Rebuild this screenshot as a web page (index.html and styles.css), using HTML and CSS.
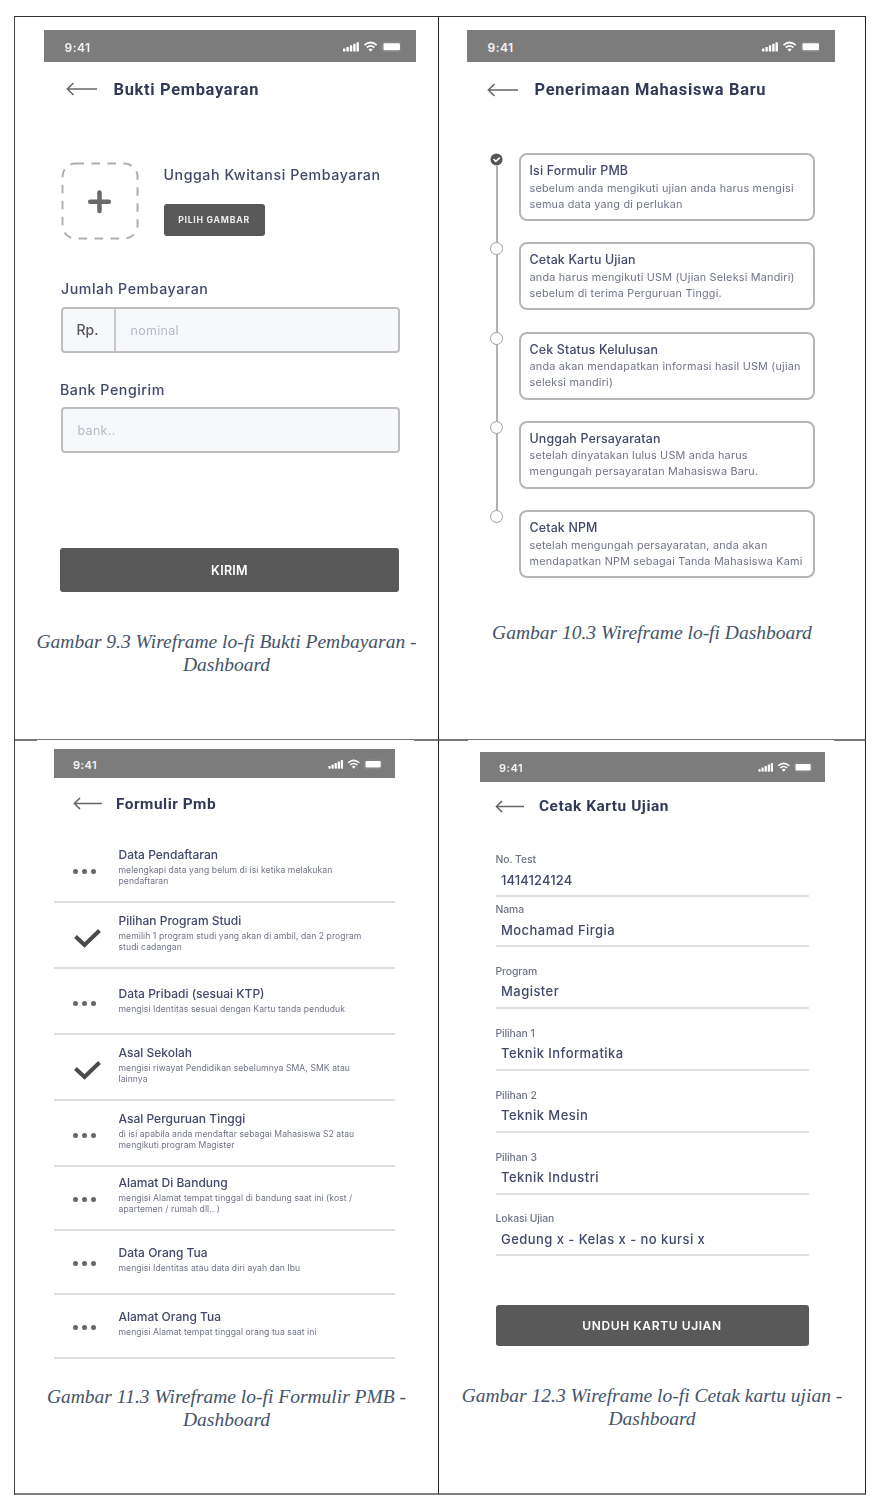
FILE: index.html
```html
<!DOCTYPE html>
<html lang="id">
<head>
<meta charset="utf-8">
<title>Wireframe lo-fi Dashboard</title>
<link rel="stylesheet" href="styles.css">
</head>
<body>
<svg class="defs" width="0" height="0" aria-hidden="true">
  <symbol id="status" viewBox="0 0 58 12">
    <g fill="#fff">
      <rect x="0" y="7.5" width="2.4" height="3" rx=".6"/><rect x="3.4" y="6" width="2.4" height="4.500" rx=".6"/><rect x="6.800" y="4.300" width="2.400" height="6.200" rx=".6"/><rect x="10.200" y="2.800" width="2.400" height="7.700" rx=".6"/><rect x="13.500" y="1.200" width="2.400" height="9.300" rx=".6"/>
      <rect x="40.500" y="2.300" width="16.500" height="7" rx="1.300"/>
    </g>
    <rect x="39.300" y="1.100" width="18.700" height="9.400" rx="2.200" fill="none" stroke="#fff" stroke-opacity=".15" stroke-width=".8"/>
    <g fill="none" stroke="#fff" stroke-width="1.700"><path d="M21.500 4.100Q27.600-1.100 33.700 4.100"/><path d="M23.800 6.500Q27.600 3.400 31.400 6.500"/></g>
    <path d="M25.500 8.200Q27.600 6.700 29.700 8.200L27.600 10.700Z" fill="#fff"/>
  </symbol>
  <symbol id="back" viewBox="0 0 31 14"><path d="M7 1.500L1.300 7L7 12.500M1.300 7H30.500" fill="none" stroke="#666" stroke-width="1.600" stroke-linecap="round" stroke-linejoin="round"/></symbol>
  <symbol id="check" viewBox="0 0 28 20"><path d="M2.500 8.500L11.500 17L26.500 2.500" fill="none" stroke="#4a4a4a" stroke-width="4"/></symbol>
  <symbol id="dots" viewBox="0 0 28 20"><g fill="#666"><circle cx="2.500" cy="9.500" r="2.500"/><circle cx="11.500" cy="9.500" r="2.500"/><circle cx="20.500" cy="9.500" r="2.500"/></g></symbol>
</svg>

<main class="sheet">
  <section class="cell">
    <div class="phone pay">
      <div class="bar"><span>9:41</span><svg><use href="#status"/></svg></div>
      <header class="head"><svg><use href="#back"/></svg><h2>Bukti Pembayaran</h2></header>
      <div class="upload">
        <svg class="drop" viewBox="0 0 78 78"><rect x="1.500" y="1.500" width="75" height="75" rx="13" fill="none" stroke="#b0b0b0" stroke-width="2" stroke-dasharray="8.500 7.500"/><path d="M38.500 30.500V49M29.200 39.700H47.800" stroke="#6a6a6a" stroke-width="4.500" stroke-linecap="round"/></svg>
        <div class="upload-text"><h3>Unggah Kwitansi Pembayaran</h3><span class="pick">PILIH GAMBAR</span></div>
      </div>
      <label class="lbl lbl-a">Jumlah Pembayaran</label>
      <div class="input"><span class="prefix">Rp.</span><span class="hint">nominal</span></div>
      <label class="lbl lbl-b">Bank Pengirim</label>
      <div class="input"><span class="hint">bank..</span></div>
      <div class="btn">KIRIM</div>
    </div>
    <p class="caption cap-a">Gambar 9.3 Wireframe lo-fi Bukti Pembayaran -<br>Dashboard</p>
  </section>

  <section class="cell">
    <div class="phone pmb">
      <div class="bar"><span>9:41</span><svg><use href="#status"/></svg></div>
      <header class="head"><svg><use href="#back"/></svg><h2>Penerimaan Mahasiswa Baru</h2></header>
      <div class="timeline">
        <div class="step done"><i><svg viewBox="0 0 14 14"><circle cx="7" cy="7" r="6.500" fill="#555"/><path d="M3.800 6.500L6.300 9L10.500 5" fill="none" stroke="#fff" stroke-width="1.700"/></svg></i><div class="card"><h3>Isi Formulir PMB</h3><p>sebelum anda mengikuti ujian anda harus mengisi<br>semua data yang di perlukan</p></div></div>
        <div class="step"><i></i><div class="card"><h3>Cetak Kartu Ujian</h3><p>anda harus mengikuti USM (Ujian Seleksi Mandiri)<br>sebelum di terima Perguruan Tinggi.</p></div></div>
        <div class="step"><i></i><div class="card"><h3>Cek Status Kelulusan</h3><p>anda akan mendapatkan informasi hasil USM (ujian<br>seleksi mandiri)</p></div></div>
        <div class="step"><i></i><div class="card"><h3>Unggah Persayaratan</h3><p>setelah dinyatakan lulus USM anda harus<br>mengungah persayaratan Mahasiswa Baru.</p></div></div>
        <div class="step"><i></i><div class="card"><h3>Cetak NPM</h3><p>setelah mengungah persayaratan, anda akan<br>mendapatkan NPM sebagai Tanda Mahasiswa Kami</p></div></div>
      </div>
    </div>
    <p class="caption cap-b">Gambar 10.3 Wireframe lo-fi Dashboard</p>
  </section>

  <section class="cell low">
    <div class="paper paper-a">
    <div class="phone form">
      <div class="bar"><span>9:41</span><svg><use href="#status"/></svg></div>
      <header class="head"><svg><use href="#back"/></svg><h2>Formulir Pmb</h2></header>
      <div class="list">
        <div class="row"><svg><use href="#dots"/></svg><div><h3>Data Pendaftaran</h3><p>melengkapi data yang belum di isi ketika melakukan<br>pendaftaran</p></div></div>
        <div class="row"><svg><use href="#check"/></svg><div><h3>Pilihan Program Studi</h3><p>memilih 1 program studi yang akan di ambil, dan 2 program<br>studi cadangan</p></div></div>
        <div class="row one"><svg><use href="#dots"/></svg><div><h3>Data Pribadi (sesuai KTP)</h3><p>mengisi Identitas sesuai dengan Kartu tanda penduduk</p></div></div>
        <div class="row"><svg><use href="#check"/></svg><div><h3>Asal Sekolah</h3><p>mengisi riwayat Pendidikan sebelumnya SMA, SMK atau<br>lainnya</p></div></div>
        <div class="row"><svg><use href="#dots"/></svg><div><h3>Asal Perguruan Tinggi</h3><p>di isi apabila anda mendaftar sebagai Mahasiswa S2 atau<br>mengikuti program Magister</p></div></div>
        <div class="row short"><svg><use href="#dots"/></svg><div><h3>Alamat Di Bandung</h3><p>mengisi Alamat tempat tinggal di bandung saat ini (kost /<br>apartemen / rumah dll.. )</p></div></div>
        <div class="row short one"><svg><use href="#dots"/></svg><div><h3>Data Orang Tua</h3><p>mengisi Identitas atau data diri ayah dan Ibu</p></div></div>
        <div class="row short one"><svg><use href="#dots"/></svg><div><h3>Alamat Orang Tua</h3><p>mengisi Alamat tempat tinggal orang tua saat ini</p></div></div>
      </div>
    </div>
    </div>
    <p class="caption cap-c">Gambar 11.3 Wireframe lo-fi Formulir PMB -<br>Dashboard</p>
  </section>

  <section class="cell low">
    <div class="paper paper-b">
    <div class="phone kartu">
      <div class="bar"><span>9:41</span><svg><use href="#status"/></svg></div>
      <header class="head"><svg><use href="#back"/></svg><h2>Cetak Kartu Ujian</h2></header>
      <dl class="fields">
        <div class="tight"><dt>No. Test</dt><dd class="num">1414124124</dd></div>
        <div><dt>Nama</dt><dd>Mochamad Firgia</dd></div>
        <div><dt>Program</dt><dd>Magister</dd></div>
        <div><dt>Pilihan 1</dt><dd>Teknik Informatika</dd></div>
        <div><dt>Pilihan 2</dt><dd>Teknik Mesin</dd></div>
        <div><dt>Pilihan 3</dt><dd>Teknik Industri</dd></div>
        <div><dt>Lokasi Ujian</dt><dd>Gedung x - Kelas x - no kursi x</dd></div>
      </dl>
      <div class="btn">UNDUH KARTU UJIAN</div>
    </div>
    </div>
    <p class="caption cap-d">Gambar 12.3 Wireframe lo-fi Cetak kartu ujian -<br>Dashboard</p>
  </section>
</main>
</body>
</html>
```
FILE: styles.css
```css
* { box-sizing: border-box; }
body { margin: 0; background: #fff; }
h2, h3, p, dl, dd { margin: 0; font-weight: 500; }
svg { display: block; flex: none; }
.defs { position: absolute; }

.sheet {
  display: grid;
  grid-template-columns: 424px 427px;
  grid-template-rows: 723px 755px;
  width: 852px;
  margin: 16px 0 0 14px;
  border-top: 1px solid #333;
  border-left: 1px solid #444;
}
.cell { border-right: 1px solid #222; border-bottom: 1px solid #777; }
.low { border-bottom: 2px solid #808080; background: linear-gradient(#777, #777) top / 100% 1px no-repeat; }
.paper { background: #fff; }
.paper-a { width: 377px; margin-left: 22px; padding: 9px 0 0 17px; }
.paper-b { width: 366px; margin-left: 29px; padding: 11.5px 0 0 12px; }

.phone { font-family: Inter, "Open Sans", sans-serif; color: #41486a; filter: blur(.6px); }
.bar {
  display: flex; align-items: center; justify-content: space-between;
  height: 32px; padding: 3px 15px 0 21px; background: #7c7c7c;
  color: #f4f4f4; font-size: 12px; font-weight: 600; letter-spacing: .5px;
}
.bar svg { width: 58px; height: 12px; margin-top: -1px; }
.head { display: flex; align-items: center; height: 24px; }
.head svg { width: 31px; height: 14px; }
.head h2 {
  margin-left: 17px; white-space: nowrap;
  font: 700 16.4px/24px Roboto, "Liberation Sans", sans-serif; color: #303a56; letter-spacing: .7px;
}
.btn {
  display: flex; align-items: center; justify-content: center;
  background: #595959; border-radius: 3px; color: #fff; font-weight: 600;
}

/* Payment proof */
.pay { width: 372.5px; margin: 13px 0 0 28.5px; }
.pay .head { margin: 15px 0 0 22px; }
.pay h2 { padding-top: 1px; }
.upload { display: flex; gap: 25px; margin: 61px 0 0 17px; height: 78px; }
.drop { width: 78px; height: 78px; }
.upload h3 { margin-top: 3px; font-size: 14.2px; line-height: 20px; letter-spacing: .56px; white-space: nowrap; }
.pick {
  display: flex; align-items: center; justify-content: center;
  width: 101px; height: 32px; margin-top: 19px; border-radius: 3px;
  background: #595959; color: #eee; font-size: 8.7px; font-weight: 700; letter-spacing: .75px;
}
.lbl { display: block; margin-left: 17.5px; font-size: 14.2px; line-height: 20px; font-weight: 500; letter-spacing: .55px; }
.lbl-a { margin-top: 39px; margin-bottom: 8px; }
.lbl-b { margin-top: 27px; margin-bottom: 7px; margin-left: 16.5px; }
.input {
  display: flex; align-items: center; width: 339px; height: 46px; margin-left: 17px;
  border: 2px solid #bebebe; border-radius: 4px; background: #f7f8fc;
}
.prefix { width: 53px; padding-left: 14px; line-height: 42px; border-right: 2px solid #c8c8c8; color: #555; font-size: 14px; font-weight: 500; }
.hint { padding-left: 15px; color: #b8bac2; font-size: 12.5px; letter-spacing: .3px; }
.pay .btn { width: 339px; height: 44px; margin: 95px 0 0 16.5px; font-size: 12.5px; letter-spacing: .3px; }

/* Admission steps */
.pmb { width: 368px; margin: 13px 0 0 27.5px; }
.pmb .head { margin: 16px 0 0 20px; }
.timeline { display: flex; flex-direction: column; gap: 21.3px; margin: 51px 0 0 23px; }
.step { display: flex; gap: 16px; position: relative; }
.step:not(:last-child)::before { content: ""; position: absolute; left: 6px; top: 8px; width: 2px; height: 89px; background: #b2b2b2; }
.step i { position: relative; width: 13px; height: 13px; border: 1.5px solid #a0a0a0; border-radius: 50%; background: #fff; }
.step.done i { border: 0; }
.step i svg { width: 13px; height: 13px; }
.card { width: 296px; height: 68px; padding: 8px 0 0 9px; border: 2px solid #b5b5b5; border-radius: 8px; white-space: nowrap; }
.card h3 { font-size: 12.4px; line-height: 16px; letter-spacing: .17px; }
.card p { margin-top: 1.5px; font-size: 10.8px; line-height: 16px; font-weight: 400; color: #6f7486; letter-spacing: .22px; }

/* Registration form list */
.form { width: 341px; margin-left: 0; }
.form .bar { height: 29px; padding: 3px 13px 0 19px; font-size: 11px; }
.form .bar svg, .kartu .bar svg { width: 54px; height: 11px; }
.form .head { margin: 13.5px 0 .5px 18.5px; }
.form .head svg, .kartu .head svg { width: 29px; height: 13px; }
.form .head h2 { margin-left: 14.5px; font-size: 15.4px; letter-spacing: .5px; }
.list { margin-top: 21px; }
.row { display: flex; height: 66px; padding: 10px 0 0 19px; border-bottom: 2px solid #dfdfdf; }
.row svg { width: 28px; height: 20px; margin: 15px 17.5px 0 0; }
.row h3 { font-size: 12px; line-height: 16px; letter-spacing: 0; white-space: nowrap; }
.row p { margin-top: 2px; font-size: 8.6px; line-height: 11.5px; font-weight: 400; color: #6f7486; letter-spacing: .07px; white-space: nowrap; }
.one { padding-top: 17px; }
.one svg { margin-top: 8px; }
.short { height: 64px; padding-top: 8px; }
.short.one { padding-top: 14px; }
.short.one svg { margin-top: 9px; }

/* Exam card */
.kartu { width: 345px; }
.kartu .bar { height: 30px; padding: 3px 13px 0 19px; font-size: 11px; }
.kartu .head { margin: 12.5px 0 0 15px; }
.kartu .head h2 { margin-left: 15px; font-size: 15.4px; letter-spacing: .55px; }
.fields { margin: 34px 0 0 15.5px; width: 313px; }
.fields div { height: 45px; margin-bottom: 16.9px; border-bottom: 2px solid #e0e0e0; }
.fields .tight { margin-bottom: 5px; }
.fields dt { font-size: 10.4px; line-height: 16px; color: #6f7486; letter-spacing: -.1px; }
.fields dd { margin: 1.5px 0 0 5.5px; font-size: 13px; line-height: 20px; letter-spacing: .45px; }
.fields .num { letter-spacing: .1px; }
.kartu .btn { width: 313px; height: 41px; margin: 49px 0 0 15.5px; padding-bottom: 1px; font-size: 12px; letter-spacing: .6px; }

.caption { font: italic 19.5px/23px "Liberation Serif", serif; color: #44546a; text-align: center; white-space: nowrap; }
.cap-a { margin-top: 38px; }
.cap-b { margin-top: 43px; }
.cap-c { margin-top: 26px; }
.cap-d { margin-top: 38px; }
```
